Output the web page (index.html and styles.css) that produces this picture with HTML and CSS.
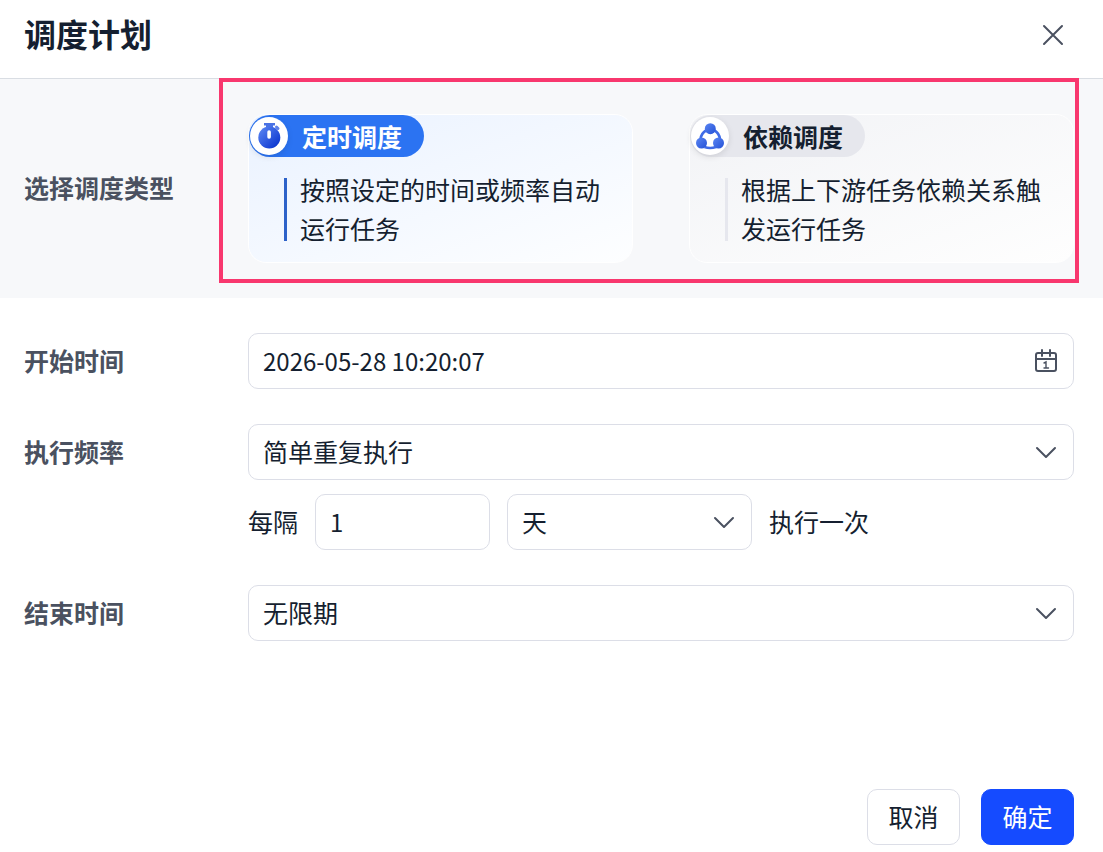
FILE: index.html
```html
<!DOCTYPE html>
<html lang="zh-CN">
<head>
    <meta charset="UTF-8">
    <meta name="viewport" content="width=device-width, initial-scale=1.0">
    <title>调度计划</title>
    <link rel="stylesheet" href="styles.css">
</head>
<body>
    <form class="dialog">
        <header class="dialog-header">
            <h1>调度计划</h1>
            <button type="button" class="close-btn" aria-label="关闭">
                <svg width="22" height="22" viewBox="0 0 22 22" fill="none" stroke="currentColor" stroke-width="2" stroke-linecap="round">
                    <path d="M2 2L20 20M20 2L2 20"/>
                </svg>
            </button>
        </header>

        <section class="type-section">
            <span class="label" id="typeLabel">选择调度类型</span>
            <div class="type-list" role="radiogroup" aria-labelledby="typeLabel">
                <label class="type-card active">
                    <input type="radio" name="type" value="timer" checked>
                    <span class="pill">
                        <span class="pill-icon">
                            <svg width="26" height="26" viewBox="0 0 26 26">
                                <defs>
                                    <linearGradient id="clockFill" x1="0" y1="0" x2="1" y2="1">
                                        <stop offset="0.1" stop-color="#5580f0"/>
                                        <stop offset="0.9" stop-color="#0a35cf"/>
                                    </linearGradient>
                                </defs>
                                <path d="M8 0h11v2.500h-2v3h-7v-3H8z" fill="#4a72e4"/>
                                <path d="M20.500 4l1.500 1.500" stroke="#5f82ea" stroke-width="3" stroke-linecap="round"/>
                                <circle cx="13.300" cy="14.500" r="11" fill="url(#clockFill)"/>
                                <rect x="11.300" y="7.300" width="3.600" height="8.400" rx="1.700" fill="#fff"/>
                            </svg>
                        </span>
                        定时调度
                    </span>
                    <span class="desc"><span class="bar"></span><span>按照设定的时间或频率自动运行任务</span></span>
                </label>
                <label class="type-card">
                    <input type="radio" name="type" value="depend">
                    <span class="pill">
                        <span class="pill-icon">
                            <svg width="28" height="28" viewBox="0 0 28 28">
                                <defs>
                                    <linearGradient id="nodeFill" x1="0" y1="0" x2="1" y2="1">
                                        <stop offset="0" stop-color="#5b86f3"/>
                                        <stop offset="1" stop-color="#2451d6"/>
                                    </linearGradient>
                                </defs>
                                <g fill="none" stroke="#3f6be6" stroke-width="2.600">
                                    <path d="M10 8.500Q5.500 11 4.500 17"/>
                                    <path d="M18.500 8.500Q23 11 24 17"/>
                                    <path d="M8.500 25Q14 27 20 25"/>
                                </g>
                                <circle cx="14.300" cy="6.700" r="5.500" fill="url(#nodeFill)"/>
                                <circle cx="5.500" cy="21" r="5.500" fill="url(#nodeFill)"/>
                                <circle cx="22.500" cy="21" r="5.500" fill="url(#nodeFill)"/>
                            </svg>
                        </span>
                        依赖调度
                    </span>
                    <span class="desc"><span class="bar"></span><span>根据上下游任务依赖关系触发运行任务</span></span>
                </label>
            </div>
            <div class="highlight"></div>
        </section>

        <section class="fields">
            <div class="row">
                <label class="label" for="startTime">开始时间</label>
                <div class="control">
                    <input type="text" id="startTime" class="date-input" value="2026-05-28 10:20:07">
                    <svg class="icon" width="24" height="24" viewBox="0 0 24 24" fill="none" stroke="currentColor" stroke-width="2" stroke-linecap="round">
                        <rect x="2" y="4" width="20" height="18" rx="2"/>
                        <path d="M2 10H22M8 1V7M16 1V7"/>
                        <path d="M10 14L12 13V19M10 19H14.500" stroke-width="1.400"/>
                    </svg>
                </div>
            </div>

            <div class="row">
                <label class="label" for="frequency">执行频率</label>
                <div class="stack">
                    <div class="control">
                        <select id="frequency">
                            <option>简单重复执行</option>
                        </select>
                        <svg class="icon" width="24" height="24" viewBox="0 0 24 24" fill="none" stroke="currentColor" stroke-width="2" stroke-linecap="round" stroke-linejoin="round">
                            <path d="M3 8L12 17L21 8"/>
                        </svg>
                    </div>
                    <div class="interval">
                        <label for="every">每隔</label>
                        <input type="text" id="every" class="every-input" value="1">
                        <div class="control unit">
                            <select id="unit" aria-label="单位">
                                <option>天</option>
                            </select>
                            <svg class="icon" width="24" height="24" viewBox="0 0 24 24" fill="none" stroke="currentColor" stroke-width="2" stroke-linecap="round" stroke-linejoin="round">
                                <path d="M3 8L12 17L21 8"/>
                            </svg>
                        </div>
                        <span>执行一次</span>
                    </div>
                </div>
            </div>

            <div class="row">
                <label class="label" for="endTime">结束时间</label>
                <div class="control">
                    <select id="endTime">
                        <option>无限期</option>
                    </select>
                    <svg class="icon" width="24" height="24" viewBox="0 0 24 24" fill="none" stroke="currentColor" stroke-width="2" stroke-linecap="round" stroke-linejoin="round">
                        <path d="M3 8L12 17L21 8"/>
                    </svg>
                </div>
            </div>
        </section>

        <footer class="dialog-footer">
            <button type="button" class="btn">取消</button>
            <button type="submit" class="btn primary">确定</button>
        </footer>
    </form>
</body>
</html>
```
FILE: styles.css
```css
* {
    box-sizing: border-box;
}
body {
    margin: 0;
    font-family: "Noto Sans CJK SC", sans-serif;
    font-size: 25px;
    line-height: 39px;
    color: #151f30;
    background-color: #fff;
}
input, select, button {
    font-family: inherit;
    font-size: inherit;
    color: inherit;
}
.dialog {
    display: flex;
    flex-direction: column;
    min-height: 100vh;
}

/* header */
.dialog-header {
    display: flex;
    align-items: center;
    justify-content: space-between;
    padding: 9px 34px 21px 24px;
    border-bottom: 1px solid #d9dde3;
}
h1 {
    margin: 0;
    font-size: 32px;
    line-height: 48px;
}
.close-btn {
    display: flex;
    margin-top: 4px;
    padding: 5px;
    border: none;
    background: none;
    color: #4a5160;
    cursor: pointer;
}
.label {
    flex: 0 0 224px;
    padding-bottom: 2px;
    font-weight: bold;
    color: #4a5160;
}

/* schedule type */
.type-section {
    position: relative;
    display: flex;
    align-items: center;
    padding: 35px 29px 35px 24px;
    background-color: #f7f8fa;
}
.highlight {
    position: absolute;
    top: -1px;
    right: 24px;
    bottom: 15px;
    left: 219px;
    border: 4px solid #f8376e;
    pointer-events: none;
}
.type-list {
    flex: 1;
    display: grid;
    grid-template-columns: 1fr 1fr;
    gap: 56px;
}
.type-card {
    position: relative;
    padding-bottom: 14px;
    border: 1px solid #fff;
    border-radius: 18px;
    background: linear-gradient(160deg, #f2f3f6, #fefefe);
    cursor: pointer;
}
.type-card.active {
    background: linear-gradient(160deg, #eaf2ff, #fdfeff);
}
.type-card input {
    position: absolute;
    opacity: 0;
}
.pill {
    display: inline-flex;
    align-items: center;
    gap: 14px;
    height: 42px;
    padding: 0 22px 0 1px;
    border-radius: 21px;
    background-color: #e6e7ed;
    font-weight: bold;
    line-height: 40px;
    vertical-align: top;
}
.active .pill {
    background-color: #2b73f2;
    color: #fff;
}
.pill-icon {
    display: flex;
    align-items: center;
    justify-content: center;
    width: 38px;
    height: 38px;
    border-radius: 50%;
    background-color: #fff;
    box-shadow: 0 2px 6px rgba(0, 0, 0, 0.1);
}
.desc {
    display: flex;
    gap: 13px;
    margin-top: 13px;
    padding: 0 24px 0 35px;
}
.bar {
    flex: none;
    width: 3px;
    margin: 8px 0 7px;
    background-color: #e6e7ee;
}
.active .bar {
    background-color: #2d62c9;
}

/* form fields */
.fields {
    display: flex;
    flex-direction: column;
    gap: 35px;
    padding: 35px 29px 35px 24px;
}
.row {
    display: flex;
    align-items: flex-start;
}
.row > .label {
    line-height: 54px;
}
.stack {
    flex: 1;
    display: flex;
    flex-direction: column;
    gap: 14px;
}
.control {
    position: relative;
    flex: 1;
}
.control .icon {
    position: absolute;
    top: 16px;
    right: 16px;
    color: #4a5160;
    pointer-events: none;
}
.fields input, .fields select {
    display: block;
    width: 100%;
    height: 56px;
    padding: 0 14px 2px;
    border: 1px solid #dcdee7;
    border-radius: 10px;
    background-color: #fff;
    appearance: none;
}
.fields .date-input, .fields .every-input {
    font-size: 24px;
}
.interval {
    display: flex;
    align-items: center;
    gap: 17px;
}
.interval > label, .interval > span {
    padding-bottom: 2px;
}
.fields .every-input {
    width: 175px;
}
.interval .unit {
    flex: 0 0 245px;
}

/* footer */
.dialog-footer {
    display: flex;
    justify-content: flex-end;
    gap: 21px;
    margin-top: auto;
    padding: 0 29px 7px;
}
.btn {
    min-width: 93px;
    height: 56px;
    padding: 0 20px 2px;
    border: 1px solid #dcdee7;
    border-radius: 10px;
    background-color: #fff;
    cursor: pointer;
}
.btn.primary {
    border-color: #154bff;
    background-color: #154bff;
    color: #fff;
}
```
